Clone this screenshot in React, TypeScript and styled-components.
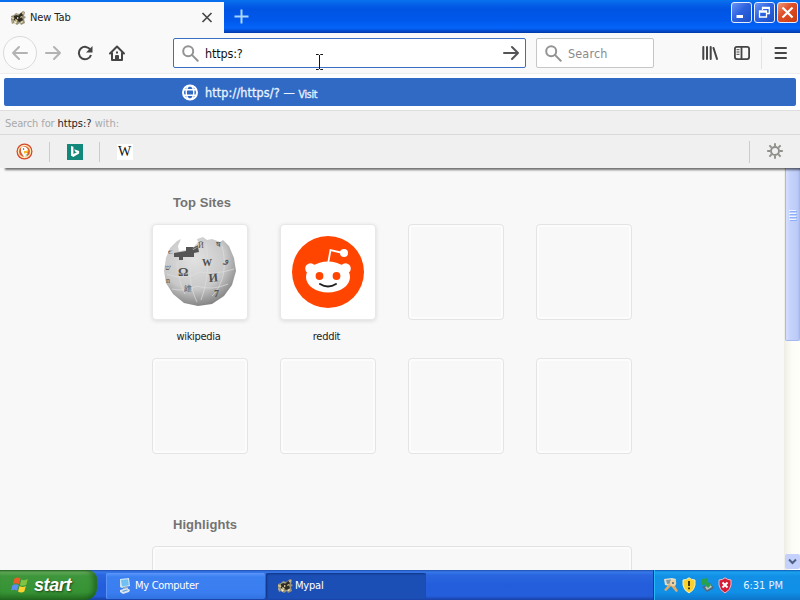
import React from "react";
import styled, { createGlobalStyle, css } from "styled-components";

const Global = createGlobalStyle`
  * { box-sizing: border-box; }
  html, body { margin: 0; padding: 0; overflow: hidden; }
  body { font-family: "DejaVu Sans Condensed", "DejaVu Sans", sans-serif; font-stretch: condensed; font-size: 11px; cursor: default; }
  svg { display: block; flex: none; }
`;

const Screen = styled.div`
  width: 800px;
  height: 600px;
  display: flex;
  flex-direction: column;
  overflow: hidden;
  background: #f8f8f9;
`;

const Label = styled.span<{ $size?: number; $track?: number; $color?: string; $heavy?: boolean }>`
  font-size: ${(p) => p.$size ?? 11}px;
  letter-spacing: ${(p) => p.$track ?? -0.3}px;
  color: ${(p) => p.$color ?? "#222"};
  -webkit-text-stroke: ${(p) => (p.$heavy ? "0.3px currentColor" : "0")};
  white-space: pre;
  line-height: 16px;
`;

const TitleBar = styled.header`
  height: 33px;
  flex: none;
  display: flex;
  align-items: flex-start;
  padding-top: 2px;
  background: linear-gradient(#0874ee 0, #0562e8 4px, #0054e3 9px, #0058eb 20px, #0464fa 28px, #0349cc 31px, #0139a8 33px);
`;

const Tab = styled.div`
  width: 224px;
  height: 31px;
  display: flex;
  align-items: center;
  padding: 0 11px 0 10px;
  background: #f9f9fa;
  svg + span { flex: 1; margin-left: 4px; }
`;

const NewTabButton = styled.div`
  width: 34px;
  height: 28px;
  display: grid;
  place-items: center;
`;

const WindowButtons = styled.div`
  margin-left: auto;
  padding-right: 2px;
  display: flex;
  gap: 2px;
`;

const WindowButton = styled.div<{ $close?: boolean }>`
  width: 21px;
  height: 21px;
  display: grid;
  place-items: center;
  border: 1px solid #e6edff;
  border-radius: 3px;
  background: ${(p) =>
    p.$close
      ? "linear-gradient(135deg, #ee9a78, #df5029 40%, #c83b12)"
      : "linear-gradient(135deg, #6b95f5, #2e63e0 45%, #1b4fc5)"};
`;

const NavBar = styled.nav`
  height: 40px;
  flex: none;
  display: flex;
  align-items: center;
  padding: 0 9px 0 3px;
  background: #f9f9fa;
`;

const BackButton = styled.div`
  width: 34px;
  height: 34px;
  border: 1px solid #dadadc;
  border-radius: 50%;
  display: grid;
  place-items: center;
  background: #fbfbfc;
`;

const NavButton = styled.div`
  width: 32px;
  display: grid;
  place-items: center;
`;

const AddressBar = styled.div`
  width: 353px;
  height: 30px;
  margin-left: 40px;
  padding: 0 5px 0 8px;
  display: flex;
  align-items: center;
  border: 1px solid #3a6fc4;
  border-radius: 2px;
  background: #fff;
  position: relative;
  svg + span { flex: 1; margin-left: 6px; padding-top: 1px; }
`;

const TextPointer = styled.svg`
  position: absolute;
  left: 141px;
  top: 15px;
`;

const SearchBox = styled.div`
  width: 118px;
  height: 30px;
  margin-left: 10px;
  padding-left: 8px;
  display: flex;
  align-items: center;
  gap: 6px;
  border: 1px solid #c6c6c8;
  border-radius: 2px;
  background: #fff;
  span { padding-top: 1px; }
`;

const Tools = styled.div`
  display: flex;
  align-items: center;
  margin-left: 40px;
`;

const MenuButton = styled.div`
  height: 32px;
  margin-left: 3px;
  padding-left: 12px;
  border-left: 1px solid #e3e3e5;
  display: grid;
  place-items: center;
`;

const Popup = styled.section`
  height: 95px;
  flex: none;
  position: relative;
  z-index: 1;
  display: flex;
  flex-direction: column;
  border-top: 1px solid #eeeeef;
  background: #fff;
  box-shadow: 5px 2px 2px rgba(0, 0, 0, 0.55);
`;

const Suggestion = styled.div`
  height: 28px;
  margin: 4px;
  padding-left: 178px;
  display: flex;
  align-items: center;
  border-radius: 2px;
  background: #316ac5;
  svg + span { margin-left: 6px; }
  span { padding-top: 1px; }
  span:last-child { padding-top: 3px; }
`;

const SearchWith = styled.div`
  height: 24px;
  padding: 5px 5px 0;
  display: flex;
  border-top: 1px solid #dededf;
  background: #f0f0f0;
`;

const Engines = styled.div`
  height: 34px;
  display: flex;
  align-items: center;
  border-top: 1px solid #d8d8d8;
  background: #f0f0f0;
`;

const Engine = styled.div<{ $last?: boolean }>`
  width: 50px;
  height: 20px;
  display: grid;
  place-items: center;
  border-right: 1px solid ${(p) => (p.$last ? "transparent" : "#cccccc")};
`;

const EngineSettings = styled.div`
  width: 51px;
  height: 22px;
  margin-left: auto;
  display: grid;
  place-items: center;
  border-left: 1px solid #cccccc;
`;

const WikiLetter = styled.span`
  width: 16px;
  height: 16px;
  background: #fff;
  color: #111;
  font: 14px/16px "Liberation Serif", serif;
  display: flex;
  justify-content: center;
`;

const Viewport = styled.div`
  height: 402px;
  flex: none;
  display: flex;
`;

const Page = styled.main`
  width: 784px;
  height: 402px;
  overflow: hidden;
  padding: 26px 0 0 152px;
  background: #f8f8f9;
`;

const Heading = styled.h2`
  margin: 0 0 0 21px;
  font: 700 13px/17px "Liberation Sans", Arial, sans-serif;
  letter-spacing: 0.05px;
  color: #737373;
`;

const Grid = styled.div`
  display: grid;
  grid-template-columns: repeat(4, 96px);
  grid-template-rows: 134px 134px;
  column-gap: 32px;
  margin: 13px 0 24px;
`;

const Site = styled.div`
  display: flex;
  flex-direction: column;
  align-items: center;
  > span { margin-top: 9px; padding-right: 3px; }
`;

const Tile = styled.div<{ $filled?: boolean }>`
  width: 96px;
  height: 96px;
  display: grid;
  place-items: center;
  border-radius: 4px;
  ${(p) =>
    p.$filled
      ? css`
          background: #fff;
          border: 1px solid #e8e8e9;
          box-shadow: 0 1px 4px rgba(12, 12, 13, 0.13);
        `
      : css`
          border: 1px solid #e4e4e5;
          box-shadow: inset 0 0 0 2px #fcfcfc;
        `}
`;

const Highlight = styled.div`
  width: 480px;
  height: 100px;
  margin-top: 13px;
  border: 1px solid #e2e2e3;
  border-radius: 4px;
  box-shadow: inset 0 0 0 2px #fcfcfc;
`;

const ScrollTrack = styled.div`
  width: 16px;
  display: flex;
  flex-direction: column;
  justify-content: space-between;
  background: linear-gradient(90deg, #eeede5, #fdfdf8 50%, #fffffa);
`;

const ScrollThumb = styled.div`
  height: 173px;
  margin-left: 1px;
  padding-top: 41px;
  display: flex;
  justify-content: center;
  border: solid #a6b9ec;
  border-width: 0 1px 1px;
  border-radius: 0 0 2px 2px;
  background: linear-gradient(90deg, #d5dfff, #c6d3fc 30%, #bccbf8 85%, #b0c0f0);
`;

const ScrollArrow = styled.div`
  height: 15px;
  margin: 0 0 1px 1px;
  display: grid;
  place-items: center;
  border-radius: 2px;
  background: #c4d2fb;
`;

const TaskBar = styled.footer`
  height: 30px;
  flex: none;
  display: flex;
  background: linear-gradient(#1f4fae 0, #3778ea 2px, #2a66df 5px, #245ddb 15px, #245edb 26px, #1941a5 30px);
`;

const StartButton = styled.div`
  width: 97px;
  padding: 0 0 0 11px;
  display: flex;
  align-items: center;
  gap: 5px;
  border-radius: 0 9px 12px 0;
  background: linear-gradient(#276a24 0, #65ac5c 2px, #3e963b 6px, #369334 22px, #246e22 30px);
  box-shadow: inset -4px 0 5px rgba(20, 75, 20, 0.55);
`;

const StartText = styled.span`
  font: italic 700 18px/24px "Liberation Sans", Arial, sans-serif;
  letter-spacing: -0.4px;
  color: #fff;
  text-shadow: 1px 1px 2px rgba(0, 0, 0, 0.55);
`;

const TaskButton = styled.div<{ $active?: boolean }>`
  width: ${(p) => (p.$active ? 160 : 159)}px;
  height: 26px;
  margin-top: 3px;
  padding-left: 11px;
  display: flex;
  align-items: center;
  gap: 2px;
  border-radius: 2px;
  background: ${(p) => (p.$active ? "#1c4fb5" : "linear-gradient(#5b96fa, #3b80f1 4px, #3a7df0 20px, #3172df)")};
  box-shadow: ${(p) => (p.$active ? "inset 1px 1px 2px #103581" : "inset 1px 0 #5a94fa")};
`;

const Tasks = styled.div`
  margin-left: 9px;
  display: flex;
  gap: 1px;
`;

const Tray = styled.div`
  width: 147px;
  margin-left: auto;
  padding: 0 17px 0 9px;
  display: flex;
  align-items: center;
  gap: 2px;
  border-left: 1px solid #0d3d91;
  background: linear-gradient(#0c59b9 0, #1ca2ee 2px, #1290e6 6px, #1190e8 22px, #0d75ca 30px);
  box-shadow: inset 1px 0 #2ab7f5;
  > span { margin-left: auto; padding-top: 1px; }
`;

const Cat = () => (
  <svg width="16" height="16" viewBox="0 0 16 16">
    <path d="m1 6 3-1 2-2 3 1 4-3 2 1-1 4 2 1-2 2 1 4-4 2-1-2-3 2-3-2-2 1-1-4z" fill="#97917a" />
    <path d="m4 6 3-1 1 1 3-3 2 1-1 4 1 2-3 2-3-1-3-1z" fill="#2d2b22" />
    <path d="m1 7 4 1-2 1-2-1zm11-4 2-1-1 3zM5 9l3 1-2 2zm6-3 2 1-3 1z" fill="#e5d49b" />
    <path d="m7 7 2 1-2 1zm-3 4 3 1-2 2zm6 1 3-1-1 2z" fill="#fff5c7" />
    <path d="m1 10 2 1-1 2zm5-6 2 0-1 1z" fill="#c0bbae" />
  </svg>
);

const Magnifier = () => (
  <svg width="17" height="17" viewBox="0 0 17 17" fill="none" stroke="#939395" strokeWidth="2">
    <circle cx="6.2" cy="6.2" r="5" />
    <path d="m9.9 9.9 5.8 5.8" strokeLinecap="round" />
  </svg>
);

const Arrow = ({ color, flip }: { color: string; flip?: boolean }) => (
  <svg width="18" height="16" viewBox="0 0 18 16" fill="none" stroke={color} strokeWidth="2" strokeLinecap="round" strokeLinejoin="round">
    <path d={flip ? "M16 8H2m6-6L2 8l6 6" : "M2 8h14m-6-6 6 6-6 6"} />
  </svg>
);

const Globe = () => (
  <svg width="17" height="17" viewBox="0 0 17 17" fill="none" stroke="#fff" strokeWidth="1.4">
    <circle cx="8" cy="8.5" r="7" strokeWidth="2" />
    <ellipse cx="8" cy="8.5" rx="3.8" ry="7" />
    <path d="M2 5.8h12M2 11.2h12" />
  </svg>
);

const Duck = () => (
  <svg width="17" height="17" viewBox="0 0 17 17">
    <circle cx="8.5" cy="8.5" r="8" fill="#d4472b" />
    <circle cx="8.5" cy="8.5" r="6.1" fill="#dc5a32" stroke="#ffe9b4" strokeWidth="1.3" />
    <path d="M5 5c2-3 6-1 7 2l-1 2 1 4-4 1-3-5z" fill="#fff" />
    <path d="m8 8 5-.4-2 2.4-3 .4z" fill="#f2bd24" />
    <circle cx="7.6" cy="6" r=".7" fill="#38455b" />
    <path d="m9 12 3-1v2z" fill="#65a54d" />
  </svg>
);

const Bing = () => (
  <svg width="16" height="16" viewBox="0 0 16 16">
    <path d="M0 0h16v16H0z" fill="#118879" />
    <path d="m4 2 2.4.8v7.3l3.4-1.8-1.7-.8-.9-2.2 4.9 1.8v2.4L6.3 13 4 11.5z" fill="#fff" />
  </svg>
);

const Gear = () => (
  <svg width="17" height="17" viewBox="0 0 17 17" fill="none" stroke="#8f8f8b" strokeWidth="1.9">
    <circle cx="8" cy="8" r="4" />
    <path d="M8 .2v3M8 12.8v3M.2 8h3M12.8 8h3M2.4 2.4l2.2 2.2M11.4 11.4l2.2 2.2M2.4 13.6l2.2-2.2M11.4 4.6l2.2-2.2" />
  </svg>
);

const WikiGlobe = () => (
  <svg width="74" height="74" viewBox="0 0 74 74">
    <defs>
      <radialGradient id="sphere" cx="42%" cy="32%" r="68%">
        <stop stopColor="#e2e2e2" />
        <stop offset=".65" stopColor="#c8c8c8" />
        <stop offset="1" stopColor="#858585" />
      </radialGradient>
    </defs>
    <path d="m7 13 7-7 4-2-3 7 1 5 13-2 6-7-1-3 6-2 4 3 5-1 8 3 3-2 6 6 5 12 2 13-4 14-8 11-12 8-14 2-14-3-11-9L3 48 1 36l2-13z" fill="url(#sphere)" />
    <path d="m11 18 12-2v-4h7v3l5-3 1 5-5 1v4H20v3h-4v-3h-5z" fill="#555" />
    <path d="m29 14 6-3" stroke="#666" strokeWidth="1.5" />
    <path d="M14 27c1 10 2 20 8 32M27 25c0 11-1 26 7 42M43 9c3 18 2 37-5 56M59 11c5 19 2 38-10 50M4 39q17 7 33-2 16 3 34-3M9 54q13 3 25-3 15 5 31-2" fill="none" stroke="#dedede" strokeWidth=".7" />
    <g fill="#505050" fontFamily="Liberation Serif, serif">
      <text x="15" y="41" fontSize="13" fontWeight="bold">Ω</text>
      <text x="39" y="31" fontSize="10" fontWeight="bold">W</text>
      <text x="46" y="47" fontSize="12" fontWeight="bold" transform="rotate(-5 46 47)">И</text>
      <text x="21" y="56" fontSize="8">維</text>
      <text x="51" y="62" fontSize="10" fontWeight="bold">7</text>
      <text x="61" y="27" fontSize="10" transform="rotate(20 61 27)">و</text>
      <text x="53" y="12" fontSize="8">ष</text>
      <text x="5" y="19" fontSize="7">Є</text>
      <text x="2" y="35" fontSize="8">ש</text>
      <text x="35" y="13" fontSize="8">Й</text>
      <text x="3" y="48" fontSize="8">n</text>
    </g>
  </svg>
);

const Reddit = () => (
  <svg width="74" height="74" viewBox="0 0 74 74">
    <circle cx="37" cy="37" r="36" fill="#ff4500" />
    <path d="m37 29 2.5-14L52 18" fill="none" stroke="#fff" strokeWidth="1.8" />
    <circle cx="53" cy="18" r="4" fill="#fff" />
    <circle cx="19.5" cy="33.5" r="5.3" fill="#fff" />
    <circle cx="54.5" cy="33.5" r="5.3" fill="#fff" />
    <ellipse cx="37" cy="42" rx="22" ry="15.5" fill="#fff" />
    <circle cx="28.5" cy="41" r="3.9" fill="#ff4500" />
    <circle cx="45.5" cy="41" r="3.9" fill="#ff4500" />
    <path d="M29 49q8 5 16 0" fill="none" stroke="#222" strokeWidth="2" strokeLinecap="round" />
  </svg>
);

const WindowsFlag = () => (
  <svg width="18" height="18" viewBox="0 0 18 18">
    <path d="M3.5 2.5q3-2 6 0L7.9 8.2q-3-2-6 0z" fill="#ee5d28" />
    <path d="M10.4 3.5q3 1.5 6.4-.5l-1.5 5.8q-3 2-6.4.2z" fill="#83c341" />
    <path d="M1.4 9.2q3-2 6.2-.1l-1.5 5.6q-3-2-6.1 0z" fill="#5f8df0" />
    <path d="M8.6 10q3 2 6.3 0l-1.6 5.6q-3 2-6.3 0z" fill="#ffd232" />
  </svg>
);

const ComputerIcon = () => (
  <svg width="16" height="16" viewBox="0 0 16 16">
    <path d="m3 1 9-1 1 8-8 2-2-1z" fill="#d2e6f4" />
    <path d="m4 2 7-.7.8 6L5 8.5z" fill="#70c0f4" />
    <path d="m6 9 5-1v3l-5 1z" fill="#8fa9c0" />
    <path d="m3 12 7-2 3 2-1 2-6 2-3-2z" fill="#dce6ef" />
    <path d="m5 13 5-1.5 1 .7-5 1.8z" fill="#5fa1d9" />
  </svg>
);

const KeysIcon = () => (
  <svg width="16" height="16" viewBox="0 0 16 16">
    <path d="m1 2 8-1 4 1-1 6-5 1-5-1z" fill="#e2dfc9" />
    <path d="m3 3 5-.6v4L4 7z" fill="#8098a6" />
    <path d="m6 7-5 6 2 1 6-6m-1 1 5 6 2-1-4-7" fill="#dcac68" />
    <circle cx="10" cy="6" r="3.2" fill="#ead0a2" />
    <circle cx="10" cy="6" r="1" fill="#4b6679" />
  </svg>
);

const Shield = ({ danger }: { danger?: boolean }) => (
  <svg width="16" height="17" viewBox="0 0 16 17">
    <path d="M8 .8Q10.5 3 14 3v5q-.5 5-6 8Q2.500 13 2 8V3q3.500 0 6-2.200z" fill={danger ? "#d71c36" : "#fbd22d"} stroke={danger ? "#edbbc9" : "#f3efb9"} />
    {danger ? (
      <path d="m5.5 5.5 5 5m0-5-5 5" stroke="#fff" strokeWidth="2" />
    ) : (
      <path d="M8 4v5m0 1.500v1.800" stroke="#352c0b" strokeWidth="1.8" />
    )}
  </svg>
);

const EjectIcon = () => (
  <svg width="16" height="16" viewBox="0 0 16 16">
    <path d="m3 10 8-4 4 5-7 4z" fill="#52687c" />
    <path d="m6 10 5-3 2 3-5 3z" fill="#b8c5ca" />
    <path d="m2 2 7-1-1 3 4 4-3 3-4-4-3 2z" fill="#28a14d" />
  </svg>
);

const sites = [
  { name: "wikipedia", icon: <WikiGlobe /> },
  { name: "reddit", icon: <Reddit /> },
];

export default function App() {
  return (
    <>
      <Global />
      <Screen>
        <TitleBar>
          <Tab>
            <Cat />
            <Label $track={-0.1}>New Tab</Label>
            <svg width="12" height="12" viewBox="0 0 12 12" stroke="#484849" strokeWidth="1.7">
              <path d="m1.500 1 9 9m0-9-9 9" />
            </svg>
          </Tab>
          <NewTabButton>
            <svg width="15" height="15" viewBox="0 0 15 15" stroke="#a9d6ff" strokeWidth="2">
              <path d="M7.5.5v14M.5 7.5h14" />
            </svg>
          </NewTabButton>
          <WindowButtons>
            <WindowButton>
              <svg width="15" height="15" viewBox="0 0 15 15"><path d="M2.500 10h6.500v3H2.500z" fill="#fff" /></svg>
            </WindowButton>
            <WindowButton>
              <svg width="15" height="15" viewBox="0 0 15 15" fill="none" stroke="#fff" strokeWidth="1.3">
                <path d="M5.5 5V2.500h6.800v6H10M2.500 6h7v6h-7zM2.500 7h7M5.500 3.300h7" />
              </svg>
            </WindowButton>
            <WindowButton $close>
              <svg width="15" height="15" viewBox="0 0 15 15" stroke="#fff" strokeWidth="2.2"><path d="m2.500 2.500 10 10m0-10-10 10" /></svg>
            </WindowButton>
          </WindowButtons>
        </TitleBar>

        <NavBar>
          <BackButton><Arrow color="#b3b3b5" flip /></BackButton>
          <NavButton><Arrow color="#b3b3b5" /></NavButton>
          <NavButton>
            <svg width="16" height="16" viewBox="0 0 16 16" fill="none" stroke="#454546" strokeWidth="2">
              <path d="M13.500 5A6.200 6.200 0 1 0 14 10" />
              <path d="M15.500 1v6.500H9z" fill="#454546" stroke="none" />
            </svg>
          </NavButton>
          <NavButton>
            <svg width="18" height="17" viewBox="0 0 18 17" fill="none" stroke="#454546" strokeWidth="2" strokeLinecap="round" strokeLinejoin="round">
              <path d="m2 8.500 7-7 7 7M4 8v7h10V8" />
              <path d="M8 15v-4h2v4M9 7.200v.6" />
            </svg>
          </NavButton>
          <AddressBar>
            <Magnifier />
            <Label $size={12.5} $track={-0.15} $color="#111">https:?</Label>
            <Arrow color="#555557" />
            <TextPointer width="9" height="16" viewBox="0 0 9 16" fill="none" stroke="#151515">
              <path d="M1 .5h2.500l1 1 1-1H8M4.500 1v14M1 15.500h2.500l1-1 1 1H8" />
            </TextPointer>
          </AddressBar>
          <SearchBox>
            <Magnifier />
            <Label $size={12.5} $track={0.15} $color="#8a8a8d">Search</Label>
          </SearchBox>
          <Tools>
            <NavButton>
              <svg width="16" height="16" viewBox="0 0 16 16" stroke="#454546" strokeWidth="2" strokeLinecap="round">
                <path d="M1.300 2v12M5 2v12M8.700 2v12M11.500 3l3.500 11" />
              </svg>
            </NavButton>
            <NavButton>
              <svg width="16" height="14" viewBox="0 0 16 14" fill="none" stroke="#454546" strokeWidth="1.8">
                <rect x=".9" y=".9" width="14.2" height="12.2" rx="2" />
                <path d="M7.500 1v12" />
                <path d="M2.500 3.700h3M2.500 6h3M2.500 8.300h3" strokeWidth="1" />
              </svg>
            </NavButton>
            <MenuButton>
              <svg width="14" height="14" viewBox="0 0 14 14" stroke="#454546" strokeWidth="2" strokeLinecap="round">
                <path d="M1.500 2h10.500M1.500 7h10.500M1.500 12h10.500" />
              </svg>
            </MenuButton>
          </Tools>
        </NavBar>

        <Popup>
          <Suggestion>
            <Globe />
            <Label $size={12.5} $track={0.12} $color="#e9f4ff" $heavy>http://https/? — </Label>
            <Label $size={10.5} $track={-0.3} $color="#e9f4ff" $heavy>Visit</Label>
          </Suggestion>
          <SearchWith>
            <Label $track={-0.12} $color="#a9a9a9">Search for </Label>
            <Label $track={0}>https:?</Label>
            <Label $track={0} $color="#a9a9a9"> with:</Label>
          </SearchWith>
          <Engines>
            <Engine><Duck /></Engine>
            <Engine><Bing /></Engine>
            <Engine $last><WikiLetter>W</WikiLetter></Engine>
            <EngineSettings><Gear /></EngineSettings>
          </Engines>
        </Popup>

        <Viewport>
          <Page>
            <Heading>Top Sites</Heading>
            <Grid>
              {Array.from({ length: 8 }, (_, i) => {
                const site = sites[i];
                return (
                  <Site key={i}>
                    <Tile $filled={!!site}>{site?.icon}</Tile>
                    {site && <Label>{site.name}</Label>}
                  </Site>
                );
              })}
            </Grid>
            <Heading>Highlights</Heading>
            <Highlight />
          </Page>
          <ScrollTrack>
            <ScrollThumb>
              <svg width="8" height="12" viewBox="0 0 8 12">
                <path d="M0 1.500h7M0 4.500h7M0 7.500h7M0 10.500h7" stroke="#eef4ff" />
                <path d="M1 2.500h7M1 5.500h7M1 8.500h7M1 11.500h7" stroke="#8cb0f8" />
              </svg>
            </ScrollThumb>
            <ScrollArrow>
              <svg width="9" height="7" viewBox="0 0 9 7" fill="none" stroke="#4d6185" strokeWidth="2"><path d="m1 1.500 3.500 3.500L8 1.500" /></svg>
            </ScrollArrow>
          </ScrollTrack>
        </Viewport>

        <TaskBar>
          <StartButton><WindowsFlag /><StartText>start</StartText></StartButton>
          <Tasks>
            <TaskButton><ComputerIcon /><Label $color="#fff">My Computer</Label></TaskButton>
            <TaskButton $active><Cat /><Label $track={-0.2} $color="#fff">Mypal</Label></TaskButton>
          </Tasks>
          <Tray>
            <KeysIcon /><Shield /><EjectIcon /><Shield danger />
            <Label $track={0} $color="#e4f3ff">6:31 PM</Label>
          </Tray>
        </TaskBar>
      </Screen>
    </>
  );
}
